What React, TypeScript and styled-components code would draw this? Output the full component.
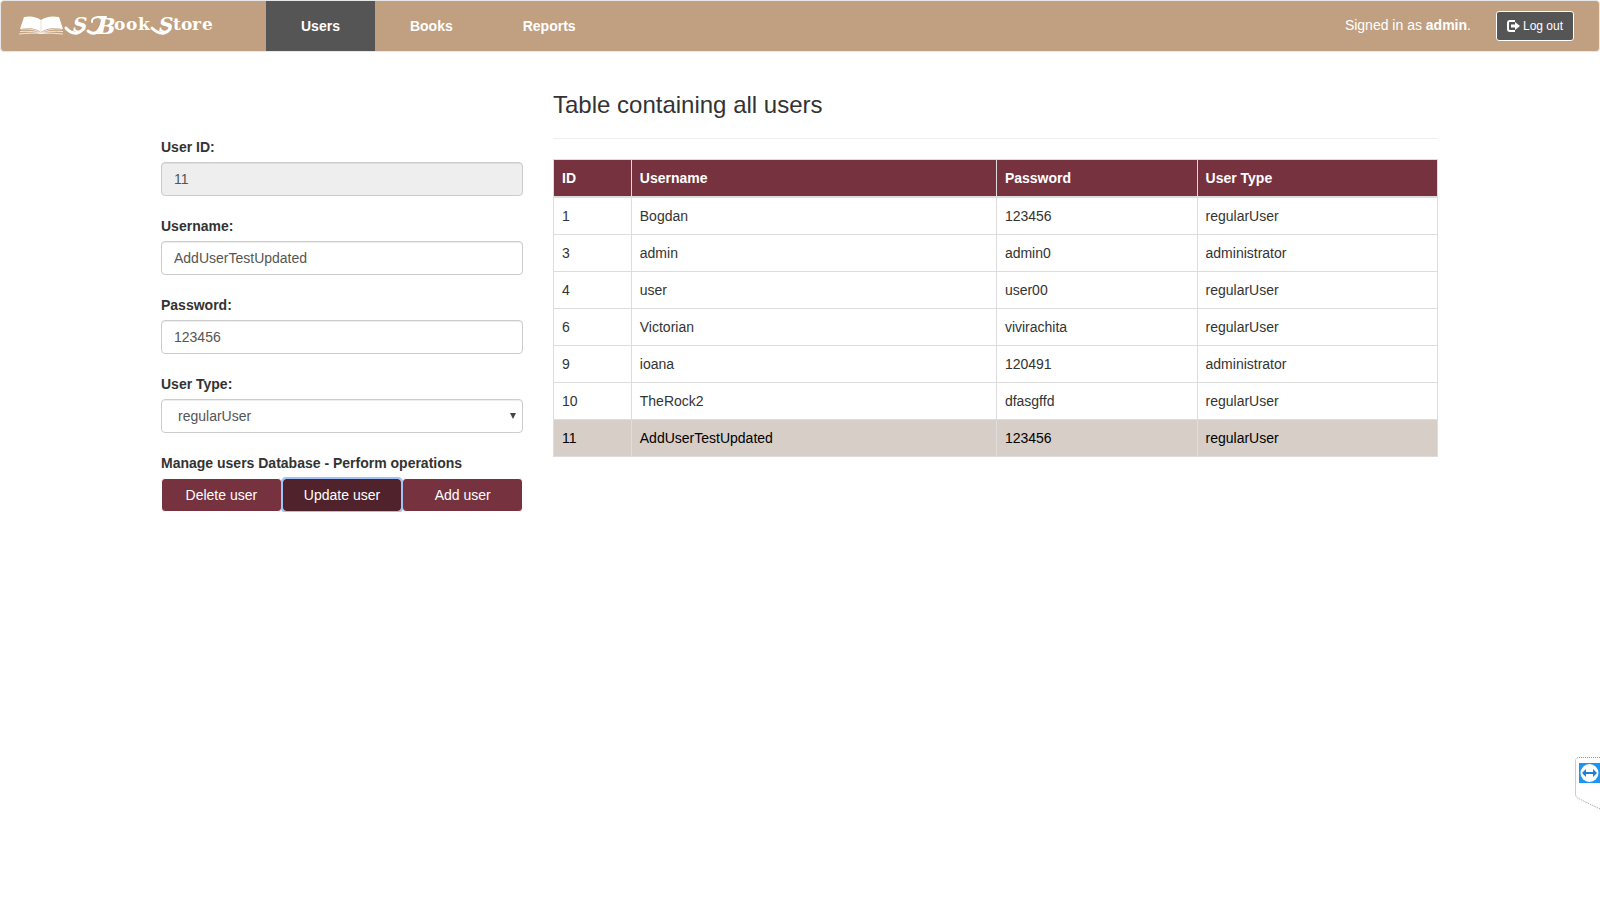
import React from "react";
import styled, { createGlobalStyle } from "styled-components";

const GlobalStyle = createGlobalStyle`
  *, *::before, *::after { box-sizing: border-box; }
  body {
    margin: 0;
    background: #fff;
    color: #333;
    font: 14px/20px "Liberation Sans", Arial, sans-serif;
  }
`;

const Navbar = styled.header`
  display: flex;
  align-items: center;
  margin-bottom: 20px;
  padding-right: 25px;
  background: #c0a080;
  border: 1px solid #e7e7e7;
  border-radius: 4px;
`;

const Brand = styled.a`
  display: block;
  flex: 0 0 265px;
  height: 50px;
  padding-left: 17px;
`;

const Tabs = styled.nav`
  display: flex;
  flex: 1;
`;

const Tab = styled.a<{ $active?: boolean }>`
  padding: 15px 35px;
  color: #fff;
  font-weight: bold;
  text-decoration: none;
  background: ${(p) => (p.$active ? "#555" : "transparent")};
`;

const SignedIn = styled.p`
  margin: 0 25px 2px 0;
  color: #fff;
`;

const LogoutButton = styled.button`
  display: flex;
  align-items: center;
  gap: 3px;
  height: 30px;
  padding: 0 10px;
  color: #fff;
  font: 12px/18px "Liberation Sans", Arial, sans-serif;
  background: #555;
  border: 1px solid #fff;
  border-radius: 3px;
`;

const Main = styled.main`
  display: grid;
  grid-template-columns: 362fr 885fr;
  gap: 30px;
  padding: 0 162px 0 161px;
`;

const UserForm = styled.form`
  padding-top: 65px;
`;

const Field = styled.div`
  margin-bottom: 20px;
`;

const Label = styled.label`
  display: block;
  margin-bottom: 5px;
  font-weight: bold;
`;

const Input = styled.input`
  display: block;
  width: 100%;
  height: 34px;
  padding: 6px 12px;
  color: #555;
  font: inherit;
  background: #fff;
  border: 1px solid #ccc;
  border-radius: 4px;
  box-shadow: inset 0 1px 1px rgba(0, 0, 0, 0.075);

  &:disabled {
    background: #eee;
  }
`;

const SelectWrap = styled.div`
  position: relative;
`;

const Select = styled(Input).attrs({ as: "select" })`
  padding: 6px 16px;
  appearance: none;
`;

const Caret = styled.svg`
  position: absolute;
  top: 14px;
  right: 7px;
  pointer-events: none;
`;

const OperationsGroup = styled.fieldset`
  display: grid;
  grid-template-columns: repeat(3, 1fr);
  min-width: 0;
  margin: 0;
  padding: 0;
  border: 0;
`;

const Legend = styled.legend`
  margin-bottom: 5px;
  padding: 0;
  font-weight: bold;
`;

const OperationButton = styled.button<{ $current?: boolean }>`
  position: relative;
  z-index: ${(p) => (p.$current ? 1 : 0)};
  height: 34px;
  padding: 0;
  color: #fff;
  font: inherit;
  background: ${(p) => (p.$current ? "#50222b" : "#76323f")};
  border: 1px solid #fff;
  border-radius: 4px;
  outline: ${(p) => (p.$current ? "2px solid #9fc3fa" : "none")};
  outline-offset: -1px;
`;

const Title = styled.h3`
  margin: 20px 0;
  font-size: 24px;
  line-height: 26px;
  font-weight: normal;
`;

const Divider = styled.hr`
  margin: 0 0 20px;
  border: 0;
  border-top: 1px solid #eee;
`;

const Table = styled.table`
  width: 100%;
  table-layout: fixed;
  border-collapse: collapse;
`;

const HeadCell = styled.th<{ $width: string }>`
  width: ${(p) => p.$width};
  padding: 8px;
  color: #fff;
  text-align: left;
  background: #76323f;
  border: 1px solid #ddd;
  border-bottom-width: 2px;
`;

const Row = styled.tr<{ $selected: boolean }>`
  color: ${(p) => (p.$selected ? "#000" : "inherit")};
  background: ${(p) => (p.$selected ? "#d7cec7" : "transparent")};
`;

const Cell = styled.td`
  padding: 8px;
  border: 1px solid #ddd;
`;

const SideTab = styled.svg`
  position: fixed;
  right: 0;
  bottom: 88px;
`;

const columns = [
  { title: "ID", width: "8.8%" },
  { title: "Username", width: "41.3%" },
  { title: "Password", width: "22.7%" },
  { title: "User Type", width: "27.2%" },
];

const users = [
  ["1", "Bogdan", "123456", "regularUser"],
  ["3", "admin", "admin0", "administrator"],
  ["4", "user", "user00", "regularUser"],
  ["6", "Victorian", "vivirachita", "regularUser"],
  ["9", "ioana", "120491", "administrator"],
  ["10", "TheRock2", "dfasgffd", "regularUser"],
  ["11", "AddUserTestUpdated", "123456", "regularUser"],
];

function Logo() {
  return (
    <svg width="200" height="50" viewBox="18 1 200 50" fill="#fff" role="img" aria-label="SBookStore">
      <path d="M24 17q10-2 17 3q7-5 18-3l4 12q-13-3-22 3q-9-6-21-3z" />
      <g fill="none" stroke="#fff" strokeWidth="1" strokeOpacity="0.75">
        <path d="M21 29q13-1 20 4q8-5 21-4M20 31.500q14-1 21 2q8-3 22-2M19 34q14-1.500 22-.500q9-1 22 .5" />
      </g>
      <path d="M41 20v11" stroke="#c0a080" strokeOpacity="0.35" />
      <g fill="none" stroke="#fff" strokeLinecap="round">
        <path d="M66 28q5 6 11 5q4-1 6-4" strokeWidth="3" />
        <path d="M88 31q5 4 9 1q4-3 6-13" strokeWidth="3" />
        <path d="M92 22q-1-4 6-5h8" strokeWidth="2" />
        <path d="M152 28q6 6 12 5q4-1 6-4" strokeWidth="3" />
      </g>
      <g fontFamily="'DejaVu Serif', serif" fontWeight="bold" fontSize="17">
        <text x="73" y="32" fontSize="20" fontStyle="italic">S</text>
        <text x="97" y="34" fontSize="22" fontStyle="italic">B</text>
        <text x="114" y="30">o</text>
        <text x="126" y="30">o</text>
        <text x="138" y="30">k</text>
        <text x="159" y="32" fontSize="20" fontStyle="italic">S</text>
        <text x="173" y="30">t</text>
        <text x="181" y="30">o</text>
        <text x="192" y="30">r</text>
        <text x="202" y="30">e</text>
      </g>
    </svg>
  );
}

function LogoutIcon() {
  return (
    <svg width="13" height="12" viewBox="0 0 13 12" aria-hidden="true">
      <path d="M8 1H3Q1 1 1 3v6q0 2 2 2h5" fill="none" stroke="#fff" strokeWidth="2" />
      <path d="M8 2l5 4-5 4V7.500H4v-3h4z" fill="#fff" />
    </svg>
  );
}

export default function App() {
  return (
    <>
      <GlobalStyle />
      <Navbar>
        <Brand href="#"><Logo /></Brand>
        <Tabs>
          <Tab href="#users" $active>Users</Tab>
          <Tab href="#books">Books</Tab>
          <Tab href="#reports">Reports</Tab>
        </Tabs>
        <SignedIn>Signed in as <b>admin</b>.</SignedIn>
        <LogoutButton type="button"><LogoutIcon />Log out</LogoutButton>
      </Navbar>
      <Main>
        <UserForm>
          <Field>
            <Label htmlFor="user-id">User ID:</Label>
            <Input id="user-id" defaultValue="11" disabled />
          </Field>
          <Field>
            <Label htmlFor="username">Username:</Label>
            <Input id="username" defaultValue="AddUserTestUpdated" />
          </Field>
          <Field>
            <Label htmlFor="password">Password:</Label>
            <Input id="password" defaultValue="123456" />
          </Field>
          <Field>
            <Label htmlFor="user-type">User Type:</Label>
            <SelectWrap>
              <Select id="user-type" defaultValue="regularUser">
                <option>regularUser</option>
                <option>administrator</option>
              </Select>
              <Caret width="6" height="6" viewBox="0 0 6 6" aria-hidden="true">
                <path d="M0 0h6L3 6z" fill="#444" />
              </Caret>
            </SelectWrap>
          </Field>
          <OperationsGroup>
            <Legend>Manage users Database - Perform operations</Legend>
            <OperationButton type="button">Delete user</OperationButton>
            <OperationButton type="button" $current>Update user</OperationButton>
            <OperationButton type="button">Add user</OperationButton>
          </OperationsGroup>
        </UserForm>
        <section>
          <Title>Table containing all users</Title>
          <Divider />
          <Table>
            <thead>
              <tr>
                {columns.map((c) => (
                  <HeadCell key={c.title} scope="col" $width={c.width}>{c.title}</HeadCell>
                ))}
              </tr>
            </thead>
            <tbody>
              {users.map((user) => (
                <Row key={user[0]} $selected={user[0] === "11"}>
                  {user.map((value, i) => <Cell key={i}>{value}</Cell>)}
                </Row>
              ))}
            </tbody>
          </Table>
        </section>
      </Main>
      <SideTab width="25" height="55" viewBox="0 0 25 55" aria-hidden="true">
        <path d="M25 .5H4Q.5.500.5 4v33q0 3 3 4.500L25 52" fill="#fff" stroke="#999" strokeDasharray="1 1" />
        <path d="M4 6h21v20H4z" fill="#1c94f2" />
        <circle cx="14.500" cy="16" r="9" fill="#fff" />
        <path d="M7 16l4-4v3h7v-3l4 4-4 4v-3h-7v3z" fill="#1c80d8" />
      </SideTab>
    </>
  );
}
